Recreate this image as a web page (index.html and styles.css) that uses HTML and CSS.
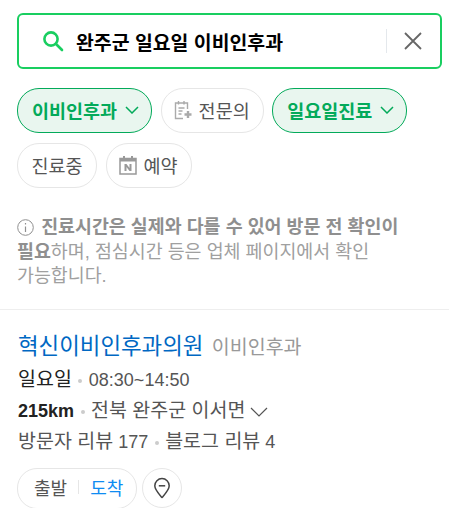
FILE: index.html
```html
<!DOCTYPE html>
<html lang="ko">
<head>
  <meta charset="UTF-8">
  <meta name="viewport" content="width=device-width, initial-scale=1.0">
  <title>완주군 일요일 이비인후과</title>
  <link rel="stylesheet" href="styles.css">
</head>
<body>

  <!-- 검색창 -->
  <div class="search-wrap">
    <div class="search-box">
      <svg class="search-icon" width="22" height="22" viewBox="0 0 22 22" fill="none" stroke="#19ce60" stroke-width="2.6">
        <circle cx="9" cy="9" r="6.600"/>
        <path d="M14 14L20 20" stroke-linecap="round"/>
      </svg>
      <span class="search-text">완주군 일요일 이비인후과</span>
      <span class="search-divider"></span>
      <svg class="search-clear" width="18" height="18" viewBox="0 0 18 18" fill="none" stroke="#666" stroke-width="1.8">
        <path d="M1 1L17 17M17 1L1 17"/>
      </svg>
    </div>
  </div>

  <!-- 필터 -->
  <div class="chips">
    <div class="chip chip-on">이비인후과
      <svg width="14" height="8" viewBox="0 0 14 8" fill="none" stroke="#03aa5a" stroke-width="1.5"><path d="M1 1L7 7L13 1"/></svg>
    </div>
    <div class="chip chip-icon">
      <svg width="18" height="20" viewBox="0 0 18 20" fill="none" stroke="#aaa" stroke-width="1.4">
        <path d="M9 18.500H1.500V3H13.500V9"/>
        <path d="M4.500 1V4.500M10 1V4.500M4.500 8H10.500M4.500 11H8.500M4.500 14H7.500"/>
        <path d="M14 11V18M10.500 14.500H17.500" stroke-width="2.400"/>
      </svg>
      전문의
    </div>
    <div class="chip chip-on">일요일진료
      <svg width="14" height="8" viewBox="0 0 14 8" fill="none" stroke="#03aa5a" stroke-width="1.5"><path d="M1 1L7 7L13 1"/></svg>
    </div>
    <div class="chip">진료중</div>
    <div class="chip chip-icon">
      <svg width="18" height="20" viewBox="0 0 18 20" fill="none">
        <path d="M1 3.500H17V19H1Z" stroke="#999" stroke-width="1.500"/>
        <path d="M1 3H17V6.500H1ZM4 1H6V4H4ZM12 1H14V4H12Z" fill="#999"/>
        <path d="M5.500 16V9H7.500L10.500 13V9H12.500V16H10.500L7.500 12V16Z" fill="#999"/>
      </svg>
      예약
    </div>
  </div>

  <!-- 안내 -->
  <p class="notice">
    <svg class="notice-icon" width="17" height="17" viewBox="0 0 17 17" fill="none" stroke="#8f8f8f">
      <circle cx="8.500" cy="8.500" r="7.800"/>
      <path d="M8.500 7.500V13" stroke-width="1.200"/>
      <path d="M8.500 4V5.500" stroke-width="1.200"/>
    </svg>
    <b>진료시간은 실제와 다를 수 있어 방문 전 확인이 필요</b>하며, 점심시간 등은 업체 페이지에서 확인 가능합니다.
  </p>

  <!-- 결과 -->
  <div class="result">
    <div class="result-title"><span class="result-name">혁신이비인후과의원</span> <span class="result-cat">이비인후과</span></div>
    <div class="result-line"><span class="ko dark">일요일</span><i class="dot"></i>08:30~14:50</div>
    <div class="result-line"><b class="dark">215km</b><i class="dot"></i><span class="ko">전북 완주군 이서면</span>
      <svg width="18" height="10" viewBox="0 0 18 10" fill="none" stroke="#555" stroke-width="1.200"><path d="M1 1L9 9L17 1"/></svg>
    </div>
    <div class="result-line"><span class="ko">방문자 리뷰</span> 177<i class="dot"></i><span class="ko">블로그 리뷰</span> 4</div>
    <div class="actions">
      <div class="route">
        <span>출발</span>
        <i class="route-line"></i>
        <span class="route-to">도착</span>
      </div>
      <div class="pin">
        <svg width="18" height="22" viewBox="0 0 18 22" fill="none" stroke="#444" stroke-width="1.500">
          <path d="M9 20.500C5 16 1.800 12.800 1.800 8.800A7.200 7.200 0 0 1 16.200 8.800C16.200 12.800 13 16 9 20.500Z" stroke-linejoin="round"/>
          <path d="M5.800 8.800H12.200"/>
        </svg>
      </div>
    </div>
  </div>

</body>
</html>
```

FILE: styles.css
```css
body {
  margin: 0;
  font-family: "Liberation Sans", "Noto Sans CJK KR", sans-serif;
  background: #fff;
  color: #555;
  overflow: hidden;
}

.search-wrap {
  padding: 13px 7px 0 17px;
}

.search-box {
  display: flex;
  align-items: center;
  height: 52px;
  border: 2px solid #19ce60;
  border-radius: 6px;
  padding: 0 18px 0 23px;
}

.search-icon {
  margin-right: 12px;
}

.search-text {
  flex: 1;
  font-size: 19.4px;
  font-weight: bold;
  color: #000;
}

.search-divider {
  width: 1px;
  height: 24px;
  background: #e4e8ec;
  margin-right: 17px;
}

.chips {
  display: flex;
  flex-wrap: wrap;
  gap: 10px 8.5px;
  padding: 19px 17px 0;
}

.chip {
  display: flex;
  align-items: center;
  gap: 8px;
  height: 41px;
  padding: 0 13.5px 2px;
  border: 1px solid #e6e6e6;
  border-radius: 22px;
  font-size: 18.5px;
  color: #555;
}

.chip-on {
  padding: 0 12px 2px 14px;
  background: #e9f6ef;
  border-color: #03aa5a;
  color: #03aa5a;
  font-weight: bold;
}

.chip-icon {
  gap: 7px;
  padding: 0 13px 2px 12px;
}

.notice {
  margin: 27px 17px 0;
  font-size: 18.4px;
  line-height: 24.5px;
  color: #a0a0a0;
  word-break: keep-all;
}

.notice b {
  color: #8f8f8f;
}

.notice-icon {
  vertical-align: -3px;
  margin-right: 2px;
}

.result {
  margin-top: 20px;
  padding: 22px 18px 0;
  border-top: 1px solid #eee;
}

.result-title {
  line-height: 30px;
}

.result-name {
  font-size: 22.4px;
  color: #0068c3;
}

.result-cat {
  font-size: 19.5px;
  color: #999;
  margin-left: 4px;
}

.result-line {
  font-size: 18px;
  line-height: 30px;
}

.ko {
  font-size: 19.5px;
}

.dark {
  color: #222;
}

.dot {
  display: inline-block;
  width: 4px;
  height: 4px;
  border-radius: 50%;
  background: #ccc;
  margin: 0 6.5px;
  vertical-align: middle;
}

.actions {
  display: flex;
  gap: 5px;
  margin-top: 11px;
  margin-left: -1px;
}

.route {
  display: flex;
  align-items: center;
  height: 37px;
  padding: 0 13px 2px 16px;
  border: 1px solid #e6e6e6;
  border-radius: 20px;
  font-size: 18px;
}

.route-line {
  width: 1px;
  height: 14px;
  background: #e6e6e6;
  margin: 0 11px;
}

.route-to {
  color: #0f8cf2;
}

.pin {
  display: flex;
  align-items: center;
  justify-content: center;
  width: 38px;
  height: 38px;
  border: 1px solid #e6e6e6;
  border-radius: 50%;
}
```
